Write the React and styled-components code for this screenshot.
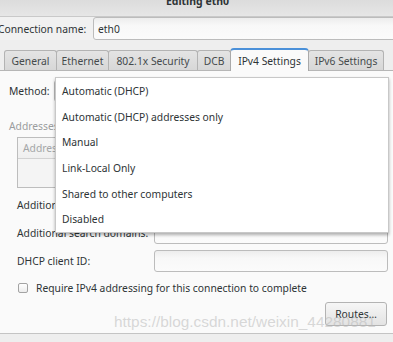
import React from "react";
import styled, { createGlobalStyle } from "styled-components";

const Global = createGlobalStyle`
  html, body { margin: 0; padding: 0; background: #eeeeee; }
  #root { width: 393px; height: 342px; overflow: hidden; }
  * { box-sizing: border-box; }
`;

const FONT = `"Noto Sans", "DejaVu Sans", sans-serif`;

const Window = styled.div`
  position: relative;
  width: 393px;
  height: 342px;
  overflow: hidden;
  display: flex;
  flex-direction: column;
  background: #eeeeee;
  font-family: ${FONT};
  font-size: 10.3px;
  color: #2e3436;
`;

const TitleBar = styled.div`
  flex: 0 0 17px;
  display: flex;
  justify-content: center;
  overflow: hidden;
  background: linear-gradient(#dcdcdc, #e6e6e6);
  border-bottom: 1px solid #c9c9c9;
`;

const Title = styled.div`
  font-weight: bold;
  font-size: 10.5px;
  line-height: 10px;
  margin-top: -4px;
  padding-left: 2px;
  color: #2e3436;
`;

const NameRow = styled.div`
  display: flex;
  align-items: center;
  height: 23px;
  overflow: hidden;
  background: #f1f1f1;
`;

const NameLabel = styled.span`
  flex: 0 0 95px;
  margin-left: -2px;
  white-space: nowrap;
`;

const TextInput = styled.div`
  flex: 0 0 ${(p) => p.$w || 234}px;
  height: ${(p) => p.$h || 22}px;
  display: flex;
  align-items: center;
  padding-left: 4px;
  border: 1px solid #bcbcbc;
  border-radius: 3px;
  background: linear-gradient(#ededed, #f8f8f8 35%, #fbfbfb);
  color: #2e3436;
`;

const TabStrip = styled.div`
  display: flex;
  align-items: flex-end;
  height: 23px;
  margin-top: 8px;
  padding-left: 5px;
  border-bottom: 1px solid #b6b6b6;
  background: #eeeeee;
`;

const Tab = styled.div`
  position: relative;
  width: ${(p) => p.$w}px;
  height: ${(p) => (p.$active ? 23 : 20)}px;
  margin-left: -1px;
  margin-bottom: ${(p) => (p.$active ? -1 : 0)}px;
  display: flex;
  align-items: center;
  justify-content: center;
  white-space: nowrap;
  border: 1px solid ${(p) => (p.$active ? "#a9a9a9" : "#b3b3b3")};
  border-bottom: none;
  border-top: ${(p) => (p.$active ? "2px solid #4a90d9" : "1px solid #b3b3b3")};
  border-radius: ${(p) => (p.$active ? "4px 4px 0 0" : "3px 3px 0 0")};
  background: ${(p) => (p.$active ? "#fafafa" : "linear-gradient(#e4e4e4, #d7d7d7)")};
  color: ${(p) => (p.$active ? "#2e3436" : "#454a4c")};
  padding-top: ${(p) => (p.$active ? 0 : 1)}px;
  z-index: ${(p) => (p.$active ? 2 : 1)};
`;

const Page = styled.div`
  position: relative;
  display: flex;
  flex-direction: column;
  height: 263px;
  padding: 9px 5px 0 9px;
  background: #fafafa;
  border-bottom: 1px solid #c4c4c4;
`;

const FormRow = styled.div`
  display: flex;
  align-items: center;
  justify-content: space-between;
  height: 22px;
  padding-left: ${(p) => p.$indent || 0}px;
  margin-top: ${(p) => p.$mt || 0}px;
`;

const Label = styled.span`
  white-space: nowrap;
  color: ${(p) => (p.$disabled ? "#999c9d" : "#2e3436")};
`;

const SectionLabel = styled.div`
  margin-top: 17px;
  line-height: 14px;
  color: #9a9d9e;
`;

const AddressTable = styled.div`
  margin: 4px 0 0 8px;
  height: 51px;
  border: 1px solid #bdbdbd;
  background: #f4f4f4;
  display: flex;
  flex-direction: column;
`;

const TableHead = styled.div`
  display: grid;
  grid-template-columns: 1fr 1fr 1fr;
  height: 21px;
  border-bottom: 1px solid #d2d2d2;
  background: linear-gradient(#f7f7f7, #efefef);
`;

const HeadCell = styled.div`
  display: flex;
  align-items: center;
  padding-left: 5px;
  color: #a3a6a7;
  border-right: 1px solid #dcdcdc;
`;

const CheckRow = styled.div`
  display: flex;
  align-items: center;
  gap: 8px;
  height: 16px;
  margin-top: 8px;
  padding-left: 9px;
`;

const CheckBox = styled.span`
  flex: 0 0 10px;
  height: 10px;
  border: 1px solid #a3a3a3;
  border-radius: 2px;
  background: linear-gradient(#ffffff, #ececec);
`;

const ButtonRow = styled.div`
  display: flex;
  justify-content: flex-end;
  margin-top: 6px;
  padding-right: 1px;
`;

const Button = styled.div`
  width: 62px;
  height: 24px;
  display: flex;
  align-items: center;
  justify-content: center;
  border: 1px solid #b3b3b3;
  border-radius: 3px;
  background: linear-gradient(#f6f6f6, #e3e3e3);
  color: #2e3436;
`;

const Menu = styled.div`
  position: absolute;
  left: 55px;
  top: 6px;
  width: 334px;
  background: #ffffff;
  border: 1px solid #c8c8c8;
  box-shadow: 0 2px 3px rgba(0, 0, 0, 0.3);
  z-index: 5;
`;

const MenuItem = styled.div`
  height: 25.7px;
  display: flex;
  align-items: center;
  padding-left: 6px;
  color: #2e3436;
  white-space: nowrap;
`;

const Watermark = styled.div`
  position: absolute;
  left: 114px;
  top: 313px;
  font-family: "Liberation Sans", Arial, sans-serif;
  font-size: 15.4px;
  line-height: 18px;
  color: rgba(185, 185, 185, 0.55);
  white-space: nowrap;
  pointer-events: none;
  z-index: 10;
`;

const tabs = [
  { label: "General", w: 53 },
  { label: "Ethernet", w: 53 },
  { label: "802.1x Security", w: 90 },
  { label: "DCB", w: 34 },
  { label: "IPv4 Settings", w: 79, active: true },
  { label: "IPv6 Settings", w: 76 },
];

const methods = [
  "Automatic (DHCP)",
  "Automatic (DHCP) addresses only",
  "Manual",
  "Link-Local Only",
  "Shared to other computers",
  "Disabled",
];

const fields = ["Additional DNS servers:", "Additional search domains:", "DHCP client ID:"];

export default function App() {
  return (
    <>
      <Global />
      <Window>
        <TitleBar>
          <Title>Editing eth0</Title>
        </TitleBar>
        <NameRow>
          <NameLabel>Connection name:</NameLabel>
          <TextInput $w={320} $h={23}>eth0</TextInput>
        </NameRow>
        <TabStrip>
          {tabs.map((t) => (
            <Tab key={t.label} $w={t.w} $active={t.active}>
              {t.label}
            </Tab>
          ))}
        </TabStrip>
        <Page>
          <FormRow>
            <Label>Method:</Label>
            <TextInput $w={334}>Automatic (DHCP)</TextInput>
          </FormRow>
          <SectionLabel>Addresses</SectionLabel>
          <AddressTable>
            <TableHead>
              <HeadCell>Address</HeadCell>
              <HeadCell>Netmask</HeadCell>
              <HeadCell>Gateway</HeadCell>
            </TableHead>
          </AddressTable>
          {fields.map((f) => (
            <FormRow key={f} $indent={8} $mt={6}>
              <Label>{f}</Label>
              <TextInput $w={234} />
            </FormRow>
          ))}
          <CheckRow>
            <CheckBox />
            <Label>Require IPv4 addressing for this connection to complete</Label>
          </CheckRow>
          <ButtonRow>
            <Button>Routes…</Button>
          </ButtonRow>
          <Menu>
            {methods.map((m) => (
              <MenuItem key={m}>{m}</MenuItem>
            ))}
          </Menu>
        </Page>
        <Watermark>https://blog.csdn.net/weixin_44280881</Watermark>
      </Window>
    </>
  );
}
